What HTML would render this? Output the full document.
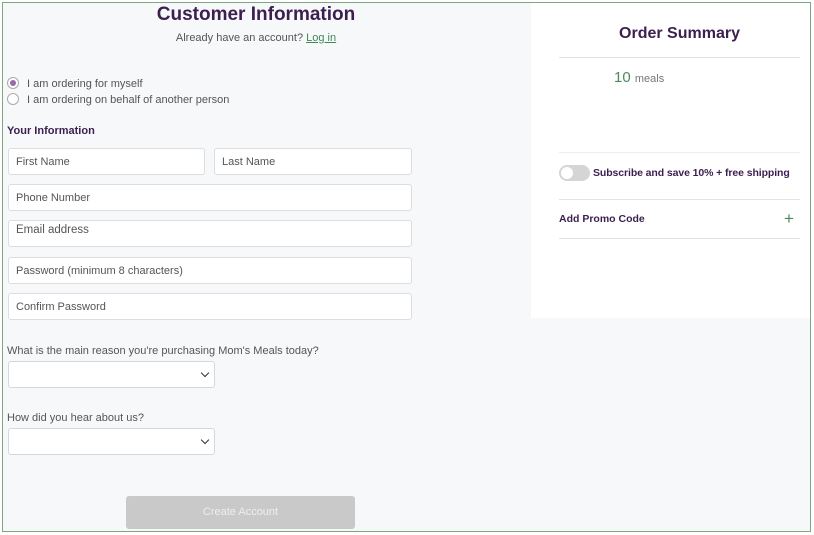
<!DOCTYPE html>
<html><head><style>
*{box-sizing:border-box;margin:0;padding:0}
body{width:814px;height:535px;background:#fff;font-family:"Liberation Sans",sans-serif;position:relative;overflow:hidden}
#frame{position:absolute;left:2px;top:2px;width:809px;height:530px;border:1px solid #7fa77f;background:#f7f8fa}
.a{position:absolute}
.inp{position:absolute;background:#fff;border:1px solid #dcdde0;border-radius:3px;font-size:11px;color:#555;padding-left:7px;display:flex;align-items:center}
.sel{position:absolute;background:#fff;border:1px solid #d6d7da;border-radius:3px}
.sel:after{content:"";position:absolute;right:6px;top:8px;width:5px;height:5px;border-right:1.5px solid #333;border-bottom:1.5px solid #333;transform:rotate(45deg)}
.purple{color:#3b1f4f}
</style></head><body>
<div id="frame"></div>
<div class="a purple" style="left:0;width:512px;top:4px;text-align:center;font-size:19px;font-weight:bold">Customer Information</div>
<div class="a" style="left:0;width:512px;top:32px;text-align:center;font-size:11px;color:#555">Already have an account? <span style="color:#3f8a52;text-decoration:underline">Log in</span></div>
<div class="a" style="left:7px;top:77px;width:12px;height:12px;border:1px solid #aaa;border-radius:50%;background:#fff"><div style="margin:2px;width:6px;height:6px;border-radius:50%;background:#9a6aa6"></div></div>
<div class="a" style="left:27px;top:78px;font-size:11px;color:#555">I am ordering for myself</div>
<div class="a" style="left:7px;top:93px;width:12px;height:12px;border:1px solid #aaa;border-radius:50%;background:#fff"></div>
<div class="a" style="left:27px;top:94px;font-size:11px;color:#555">I am ordering on behalf of another person</div>
<div class="a purple" style="left:7px;top:125px;font-size:11px;font-weight:bold">Your Information</div>
<div class="inp" style="left:8px;top:148px;width:197px;height:27px">First Name</div>
<div class="inp" style="left:214px;top:148px;width:198px;height:27px">Last Name</div>
<div class="inp" style="left:8px;top:184px;width:404px;height:27px">Phone Number</div>
<div class="inp" style="left:8px;top:220px;width:404px;height:27px;align-items:flex-start;padding-top:3px;font-size:11.5px">Email address</div>
<div class="inp" style="left:8px;top:257px;width:404px;height:27px">Password (minimum 8 characters)</div>
<div class="inp" style="left:8px;top:293px;width:404px;height:27px">Confirm Password</div>
<div class="a" style="left:7px;top:345px;font-size:11px;color:#555">What is the main reason you're purchasing Mom's Meals today?</div>
<div class="sel" style="left:8px;top:361px;width:207px;height:27px"></div>
<div class="a" style="left:7px;top:412px;font-size:11px;color:#555">How did you hear about us?</div>
<div class="sel" style="left:8px;top:428px;width:207px;height:27px"></div>
<div class="a" style="left:126px;top:496px;width:229px;height:33px;background:#c9c9c9;border-radius:3px;color:#eee;font-size:11px;text-align:center;line-height:33px">Create Account</div>
<div class="a" style="left:531px;top:3px;width:279px;height:315px;background:#fff"></div>
<div class="a purple" style="left:559px;width:241px;top:25px;text-align:center;font-size:16px;font-weight:bold">Order Summary</div>
<div class="a" style="left:559px;top:57px;width:241px;border-top:1px solid #e3e3e3"></div>
<div class="a" style="left:614px;top:69px;font-size:15px;color:#4a8a5a">10 <span style="font-size:11px;color:#777">meals</span></div>
<div class="a" style="left:559px;top:152px;width:241px;border-top:1px solid #eee"></div>
<div class="a" style="left:559px;top:165px;width:31px;height:16px;border-radius:8px;background:#d5d5d5"><div style="margin:2px;width:12px;height:12px;border-radius:50%;background:#fff"></div></div>
<div class="a purple" style="left:593px;top:167px;font-size:10.5px;font-weight:bold;letter-spacing:-0.1px">Subscribe and save 10% + free shipping</div>
<div class="a" style="left:559px;top:199px;width:241px;border-top:1px solid #e3e3e3"></div>
<div class="a purple" style="left:559px;top:213px;font-size:10.5px;font-weight:bold">Add Promo Code</div>
<div class="a" style="left:784px;top:209px;font-size:17px;color:#4a8a5a">+</div>
<div class="a" style="left:559px;top:238px;width:241px;border-top:1px solid #e3e3e3"></div>
</body></html>
